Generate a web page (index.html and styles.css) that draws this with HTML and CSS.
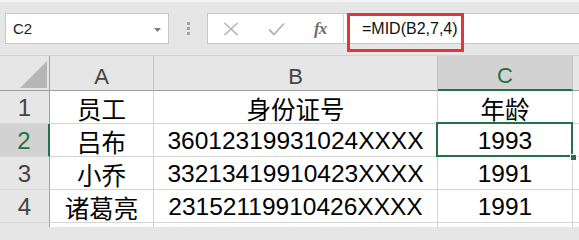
FILE: index.html
```html
<!DOCTYPE html>
<html lang="zh-CN">
<head>
<meta charset="utf-8">
<title>MID</title>
<link rel="stylesheet" href="styles.css">
</head>
<body>
<div class="app">
  <div class="toolbar">
    <div class="namebox">
      <span class="name">C2</span>
      <svg class="caret" width="7" height="4" viewBox="0 0 7 4"><path d="M0 0H7L3.5 4Z" fill="#7a7a7a"/></svg>
    </div>
    <div class="grip"><i></i><i></i><i></i></div>
    <div class="icons">
      <svg class="ico" width="16" height="14" viewBox="0 0 16 14"><path d="M1.5 1L14.5 13M14.5 1L1.5 13" stroke="#b3b3b3" stroke-width="1.6" fill="none"/></svg>
      <svg class="ico" width="17" height="14" viewBox="0 0 17 14"><path d="M1 7.5L6 12.5L16 1.5" stroke="#b3b3b3" stroke-width="1.8" fill="none"/></svg>
      <span class="fx">fx</span>
    </div>
    <div class="formula">
      <span class="ftext">=MID(B2,7,4)</span>
    </div>
    <div class="mark"></div>
  </div>
  <div class="sheet">
    <div class="hd corner">
      <svg width="27" height="27" viewBox="0 0 27 27"><path d="M27 0V27H0Z" fill="#b5b5b5"/></svg>
    </div>
    <div class="hd col">A</div>
    <div class="hd col">B</div>
    <div class="hd col sel">C</div>
    <div class="hd col"></div>

    <div class="hd row">1</div>
    <div class="c">员工</div>
    <div class="c">身份证号</div>
    <div class="c">年龄</div>
    <div class="c"></div>

    <div class="hd row sel">2</div>
    <div class="c">吕布</div>
    <div class="c">36012319931024XXXX</div>
    <div class="c active">1993<span class="handle"></span></div>
    <div class="c"></div>

    <div class="hd row">3</div>
    <div class="c">小乔</div>
    <div class="c">33213419910423XXXX</div>
    <div class="c">1991</div>
    <div class="c"></div>

    <div class="hd row">4</div>
    <div class="c">诸葛亮</div>
    <div class="c">23152119910426XXXX</div>
    <div class="c">1991</div>
    <div class="c"></div>

    <div class="hd row last"></div>
    <div class="c last"></div>
    <div class="c last"></div>
    <div class="c last"></div>
    <div class="c last"></div>
  </div>
</div>
</body>
</html>
```

FILE: styles.css
```css
* { box-sizing: border-box; }
html, body { margin: 0; padding: 0; }
html { height: 227px; overflow: hidden; }
body {
  width: 579px;
  height: 227px;
  overflow: hidden;
  background: #e6e6e6;
  font-family: "Liberation Sans", "Noto Sans CJK SC", sans-serif;
}
.app { width: 579px; height: 227px; overflow: hidden; }

.toolbar {
  position: relative;
  height: 55px;
  display: flex;
  align-items: flex-start;
  padding: 11px 0 0 5px;
  border-top: 2px solid #f3f3f3;
  background: #e6e6e6;
}
.namebox {
  width: 164px;
  height: 31px;
  background: #fff;
  border: 1px solid #c8c8c8;
  display: flex;
  align-items: center;
  justify-content: space-between;
  padding: 0 7px 0 7px;
}
.name { font-size: 15px; color: #222; }
.caret { margin-top: 2px; }
.grip {
  width: 38px;
  height: 31px;
  display: flex;
  flex-direction: column;
  align-items: center;
  justify-content: center;
  gap: 2px;
}
.grip i { display: block; width: 3px; height: 3px; background: #a3a3a3; }
.icons {
  width: 137px;
  height: 31px;
  background: #fff;
  border: 1px solid #c8c8c8;
  border-right: 1px solid #d4d4d4;
  display: flex;
  align-items: center;
  padding: 0 0 0 15px;
}
.icons .ico:first-child { margin-right: 29px; }
.icons .ico:nth-child(2) { margin-right: 29px; }
.fx {
  font-family: "Liberation Serif", "DejaVu Serif", serif;
  font-style: italic;
  font-weight: bold;
  font-size: 17px;
  color: #6e6e6e;
  letter-spacing: -1px;
}
.formula {
  flex: 1;
  height: 31px;
  background: #fff;
  border-top: 1px solid #c8c8c8;
  border-bottom: 1px solid #c8c8c8;
  display: flex;
  align-items: center;
  padding-left: 18px;
}
.ftext { font-size: 16px; color: #111; }
.mark {
  position: absolute;
  left: 347px;
  top: 11px;
  width: 117px;
  height: 39px;
  border: 3px solid #e3363b;
}

.sheet {
  display: grid;
  grid-template-columns: 50px 104px 284px 135px 20px;
  grid-template-rows: 35px 33px 33px 33px 33px 5px;
  border-top: 1px solid #d2d2d2;
  background: #fff;
}
.hd {
  background: #e6e6e6;
  color: #444;
  border-right: 1px solid #c2c2c2;
  border-bottom: 1px solid #c2c2c2;
  display: flex;
  align-items: center;
  justify-content: center;
}
.corner {
  border-bottom: 1px solid #9e9e9e;
  border-right: 1px solid #9e9e9e;
  align-items: flex-end;
  justify-content: flex-end;
  padding: 0 2px 2px 0;
}
.corner svg { display: block; }
.col {
  font-size: 22px;
  padding-top: 7px;
  border-bottom: 1px solid #9e9e9e;
}
.col.sel {
  background: #d2d2d2;
  color: #217346;
  border-bottom: 2px solid #217346;
}
.row {
  font-size: 24px;
  padding-top: 2px;
  border-right: 1px solid #9e9e9e;
  border-bottom: 1px solid #d8d8d8;
}
.row.sel {
  background: #d2d2d2;
  color: #217346;
  border-right: 2px solid #217346;
}
.c {
  position: relative;
  font-size: 24.5px;
  color: #000;
  border-right: 1px solid #d4d4d4;
  border-bottom: 1px solid #d4d4d4;
  display: flex;
  align-items: center;
  justify-content: center;
  padding-top: 2px;
  white-space: nowrap;
}
.last { border-bottom: none; }
.active::after {
  content: "";
  position: absolute;
  left: -2px;
  top: -2px;
  right: -1px;
  bottom: -1px;
  border: 2px solid #217346;
}
.handle {
  position: absolute;
  right: -5px;
  bottom: -5px;
  width: 7px;
  height: 7px;
  background: #217346;
  border: 1px solid #fff;
  z-index: 2;
}
```
